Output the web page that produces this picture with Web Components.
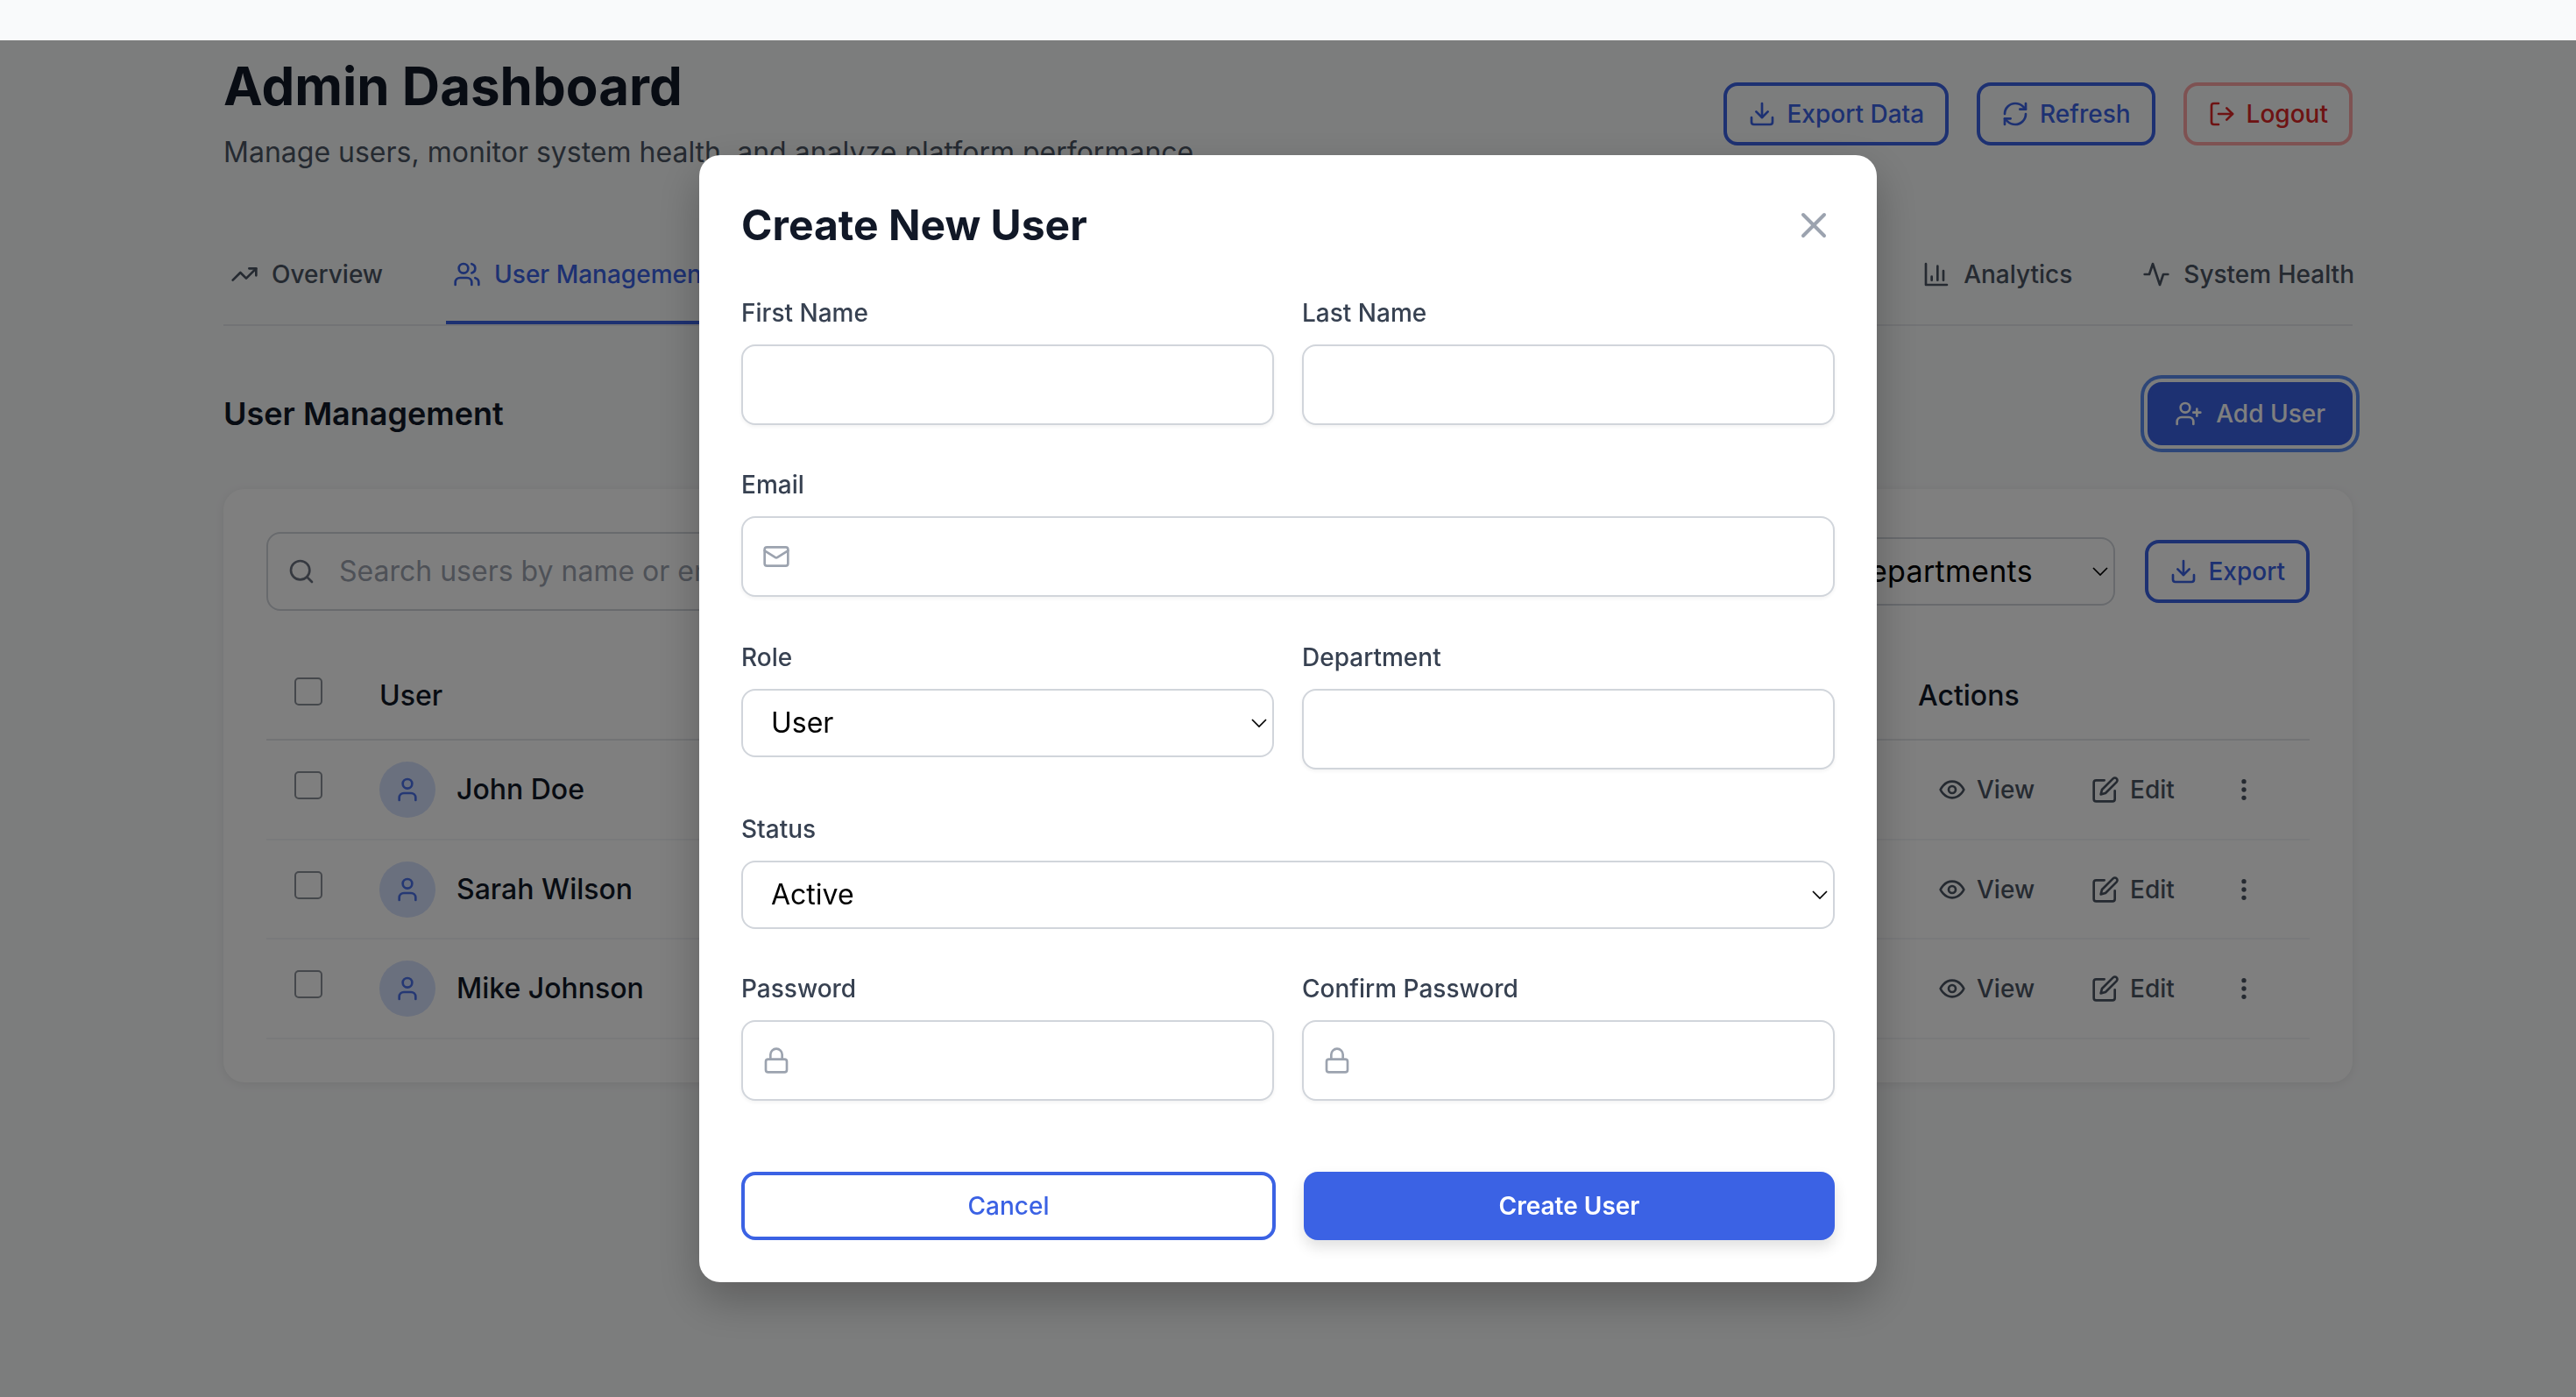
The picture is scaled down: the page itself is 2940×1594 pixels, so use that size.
<!DOCTYPE html>
<html lang="en">
<head>
<meta charset="utf-8">
<title>Admin Dashboard</title>
<style>
  html, body { margin: 0; height: 100%; }
  body {
    background: #f9fafb;
    color: #111827;
    font-family: Inter, "Noto Sans", sans-serif;
    overflow: hidden;
  }
</style>
</head>
<body>
<admin-dashboard></admin-dashboard>
<create-user-modal></create-user-modal>

<script>
// Lucide style paths, all on a 24 box
const ICONS = {
  trend: '<polyline points="22 7 13.5 15.5 8.5 10.5 2 17"/><polyline points="16 7 22 7 22 13"/>',
  users: '<path d="M16 21v-2a4 4 0 0 0-4-4H6a4 4 0 0 0-4 4v2"/><circle cx="9" cy="7" r="4"/><path d="M22 21v-2a4 4 0 0 0-3-3.87"/><path d="M16 3.13a4 4 0 0 1 0 7.75"/>',
  chart: '<path d="M3 3v18h18"/><path d="M18 17V9"/><path d="M13 17V5"/><path d="M8 17v-3"/>',
  activity: '<path d="M22 12h-4l-3 9L9 3l-3 9H2"/>',
  download: '<path d="M21 15v4a2 2 0 0 1-2 2H5a2 2 0 0 1-2-2v-4"/><polyline points="7 10 12 15 17 10"/><line x1="12" y1="15" x2="12" y2="3"/>',
  refresh: '<path d="M3 12a9 9 0 0 1 9-9 9.75 9.75 0 0 1 6.74 2.74L21 8"/><path d="M21 3v5h-5"/><path d="M21 12a9 9 0 0 1-9 9 9.75 9.75 0 0 1-6.74-2.74L3 16"/><path d="M8 16H3v5"/>',
  logout: '<path d="M9 21H5a2 2 0 0 1-2-2V5a2 2 0 0 1 2-2h4"/><polyline points="16 17 21 12 16 7"/><line x1="21" y1="12" x2="9" y2="12"/>',
  userplus: '<path d="M16 21v-2a4 4 0 0 0-4-4H6a4 4 0 0 0-4 4v2"/><circle cx="9" cy="7" r="4"/><line x1="19" y1="8" x2="19" y2="14"/><line x1="22" y1="11" x2="16" y2="11"/>',
  search: '<circle cx="11" cy="11" r="8"/><path d="m21 21-4.3-4.3"/>',
  user: '<path d="M19 21v-2a4 4 0 0 0-4-4H9a4 4 0 0 0-4 4v2"/><circle cx="12" cy="7" r="4"/>',
  eye: '<path d="M2 12s3-7 10-7 10 7 10 7-3 7-10 7-10-7-10-7Z"/><circle cx="12" cy="12" r="3"/>',
  edit: '<path d="M11 4H4a2 2 0 0 0-2 2v14a2 2 0 0 0 2 2h14a2 2 0 0 0 2-2v-7"/><path d="M18.5 2.5a2.12 2.12 0 0 1 3 3L12 15l-4 1 1-4Z"/>',
  more: '<circle cx="12" cy="5" r="1"/><circle cx="12" cy="12" r="1"/><circle cx="12" cy="19" r="1"/>',
  mail: '<rect x="2" y="4" width="20" height="16" rx="2"/><path d="m22 7-8.97 5.7a1.94 1.94 0 0 1-2.06 0L2 7"/>',
  lock: '<rect x="3" y="11" width="18" height="11" rx="2"/><path d="M7 11V7a5 5 0 0 1 10 0v4"/>',
  close: '<path d="M18 6 6 18"/><path d="m6 6 12 12"/>'
};

class AppIcon extends HTMLElement {
  constructor() {
    super();
    this.attachShadow({ mode: 'open' });
  }

  connectedCallback() {
    const size = this.getAttribute('size') || 32;
    this.shadowRoot.innerHTML = `
      <style>
        :host { display: inline-flex; flex: none; }
        svg { display: block; }
      </style>
      <svg width="${size}" height="${size}" viewBox="0 0 24 24" fill="none" stroke="currentColor"
           stroke-width="2" stroke-linecap="round" stroke-linejoin="round">${ICONS[this.getAttribute('name')]}</svg>
    `;
  }
}

class AppButton extends HTMLElement {
  constructor() {
    super();
    this.attachShadow({ mode: 'open' });
  }

  connectedCallback() {
    const icon = this.getAttribute('icon');
    this.shadowRoot.innerHTML = `
      <style>
        :host { display: inline-flex; flex: none; }
        button {
          display: flex;
          align-items: center;
          justify-content: center;
          gap: 12px;
          box-sizing: border-box;
          width: 100%;
          height: 72px;
          padding: 0 24px;
          border: 4px solid #3b62e4;
          border-radius: 16px;
          background: transparent;
          color: #3b62e4;
          font: 500 28px/40px Inter, sans-serif;
        }
        :host([variant="danger"]) button { border-color: #fca5a5; color: #dc2626; }
        /* Add User keeps its focus ring from the click that opened the modal */
        :host([variant="focused"]) button {
          background: #3b62e4;
          color: #fff;
          gap: 15px;
          padding: 0 27px;
          box-shadow: 0 0 0 4px #f9fafb, 0 0 0 8px #5a8cf0;
        }
        :host([variant="cancel"]) button { height: 78px; background: #fff; padding: 0 16px; }
        :host([variant="submit"]) button {
          height: 78px;
          padding: 0 16px;
          border-width: 2px;
          background: #3b62e4;
          color: #fff;
          font-weight: 600;
          box-shadow: 0 8px 16px rgba(0, 0, 0, .12);
        }
      </style>
      <button type="button">
        ${icon ? `<app-icon name="${icon}"></app-icon>` : ''}
        <slot></slot>
      </button>
    `;
  }
}

class TabItem extends HTMLElement {
  constructor() {
    super();
    this.attachShadow({ mode: 'open' });
  }

  connectedCallback() {
    this.shadowRoot.innerHTML = `
      <style>
        :host {
          display: flex;
          align-items: center;
          gap: 15px;
          height: 40px;
          padding: 0 8px 33px;
          border-bottom: 4px solid transparent;
          color: #4b5563;
          font: 500 28px/40px Inter, sans-serif;
          white-space: nowrap;
        }
        :host([active]) { border-bottom-color: #3b62e4; color: #3b62e4; }
      </style>
      <app-icon name="${this.getAttribute('icon')}"></app-icon>
      <slot></slot>
    `;
  }
}

class TabBar extends HTMLElement {
  constructor() {
    super();
    this.attachShadow({ mode: 'open' });
    this.shadowRoot.innerHTML = `
      <style>
        :host {
          display: flex;
          gap: 64px;
          border-bottom: 2px solid #e5e7eb;
        }
      </style>
      <slot></slot>
    `;
  }
}

class SelectBox extends HTMLElement {
  constructor() {
    super();
    this.attachShadow({ mode: 'open' });
    this.shadowRoot.innerHTML = `
      <style>
        :host {
          display: flex;
          align-items: center;
          justify-content: space-between;
          box-sizing: border-box;
          height: 78px;
          padding: 0 6px 0 32px;
          border: 2px solid #d1d5db;
          border-radius: 16px;
          background: #fff;
          color: #000;
          font: 400 32px/40px Inter, sans-serif;
        }
        svg { display: block; flex: none; }
      </style>
      <slot></slot>
      <svg width="18" height="10" viewBox="0 0 18 10" fill="none" stroke="currentColor" stroke-width="1.7">
        <polyline points="1 1 9 9 17 1"/>
      </svg>
    `;
  }
}

class SearchBox extends HTMLElement {
  constructor() {
    super();
    this.attachShadow({ mode: 'open' });
    this.shadowRoot.innerHTML = `
      <style>
        :host {
          display: flex;
          align-items: center;
          gap: 27px;
          box-sizing: border-box;
          height: 90px;
          padding: 0 24px 0 22px;
          border: 2px solid #d1d5db;
          border-radius: 16px;
          background: #fff;
        }
        app-icon { color: #6b7280; }
        input {
          flex: 1;
          min-width: 0;
          border: 0;
          outline: 0;
          padding: 0;
          background: transparent;
          font: 400 32px/40px Inter, sans-serif;
        }
        input::placeholder { color: #9ca3af; opacity: 1; }
      </style>
      <app-icon name="search"></app-icon>
      <input type="text" placeholder="Search users by name or email...">
    `;
  }
}

class UserRow extends HTMLElement {
  constructor() {
    super();
    this.attachShadow({ mode: 'open' });
    this.shadowRoot.innerHTML = `
      <style>
        :host {
          display: grid;
          grid-template-columns: 129px 1fr 447px;
          align-items: center;
          box-sizing: border-box;
          height: 113.7px;
          border-bottom: 2px solid #f3f4f6;
        }
        .check {
          box-sizing: border-box;
          width: 32px;
          height: 32px;
          margin: 0 0 10px 32px;
          border: 2px solid #8b9098;
          border-radius: 5px;
          background: #fff;
        }
        .user { display: flex; align-items: center; gap: 24px; color: #111827; font: 500 32px/40px Inter, sans-serif; }
        .avatar {
          display: flex;
          align-items: center;
          justify-content: center;
          width: 64px;
          height: 64px;
          border-radius: 50%;
          background: #d4e0fc;
          color: #4a70e8;
        }
        .actions {
          display: flex;
          align-items: center;
          gap: 65px;
          padding-left: 23px;
          color: #4b5563;
          font: 500 28px/40px Inter, sans-serif;
        }
        .action { display: flex; align-items: center; gap: 12px; }
        .dots { margin-left: -2px; }
      </style>
      <div class="check"></div>
      <div class="user">
        <div class="avatar"><app-icon name="user"></app-icon></div>
        <slot></slot>
      </div>
      <div class="actions">
        <div class="action"><app-icon name="eye"></app-icon>View</div>
        <div class="action"><app-icon name="edit"></app-icon>Edit</div>
        <app-icon class="dots" name="more"></app-icon>
      </div>
    `;
  }
}

class UserTable extends HTMLElement {
  constructor() {
    super();
    this.attachShadow({ mode: 'open' });
    this.shadowRoot.innerHTML = `
      <style>
        :host { display: block; }
        .head {
          display: grid;
          grid-template-columns: 129px 1fr 447px;
          align-items: center;
          box-sizing: border-box;
          height: 100px;
          margin-top: 48px;
          border-bottom: 2px solid #e5e7eb;
          color: #111827;
          font: 500 32px/40px Inter, sans-serif;
        }
        .check {
          box-sizing: border-box;
          width: 32px;
          height: 32px;
          margin: 0 0 10px 32px;
          border: 2px solid #8b9098;
          border-radius: 5px;
          background: #fff;
        }
      </style>
      <div class="head">
        <div class="check"></div>
        <div>User</div>
        <div>Actions</div>
      </div>
      <slot></slot>
    `;
  }
}

class AdminDashboard extends HTMLElement {
  constructor() {
    super();
    this.attachShadow({ mode: 'open' });
    this.shadowRoot.innerHTML = `
      <style>
        :host { display: block; padding: 62px 255px 0; }
        header { display: flex; align-items: center; justify-content: space-between; }
        h1 { margin: 0; font: 700 60px/72px Inter, sans-serif; color: #111827; }
        .sub { margin: 12px 0 0; font: 400 32px/56px Inter, sans-serif; color: #4b5563; white-space: nowrap; }
        .head-actions { display: flex; gap: 32px; margin-bottom: 4px; }
        tab-bar { margin-top: 91px; }
        tab-item:last-child { margin-right: -10px; }
        .spacer { flex: 1; }
        .section {
          display: flex;
          align-items: center;
          justify-content: space-between;
          margin-top: 64px;
        }
        h2 { margin: 0; font: 600 36px/56px Inter, sans-serif; color: #111827; }
        .card {
          margin-top: 50px;
          padding: 49px 49px 49px 49px;
          border-radius: 24px;
          background: #fff;
          box-shadow: 0 2px 12px rgba(0, 0, 0, .08);
        }
        .toolbar { display: flex; align-items: center; gap: 34px; }
        search-box { flex: 1; }
        select-box { width: 390px; flex: none; font-size: 34px; letter-spacing: .3px; }
      </style>
      <header>
        <div>
          <h1>Admin Dashboard</h1>
          <p class="sub">Manage users, monitor system health, and analyze platform performance.</p>
        </div>
        <div class="head-actions">
          <app-button icon="download">Export Data</app-button>
          <app-button icon="refresh">Refresh</app-button>
          <app-button icon="logout" variant="danger">Logout</app-button>
        </div>
      </header>
      <tab-bar>
        <tab-item icon="trend">Overview</tab-item>
        <tab-item icon="users" active>User Management</tab-item>
        <div class="spacer"></div>
        <tab-item icon="chart">Analytics</tab-item>
        <tab-item icon="activity">System Health</tab-item>
      </tab-bar>
      <div class="section">
        <h2>User Management</h2>
        <app-button icon="userplus" variant="focused">Add User</app-button>
      </div>
      <div class="card">
        <div class="toolbar">
          <search-box></search-box>
          <select-box>All Departments</select-box>
          <app-button icon="download">Export</app-button>
        </div>
        <user-table>
          <user-row>John Doe</user-row>
          <user-row>Sarah Wilson</user-row>
          <user-row>Mike Johnson</user-row>
        </user-table>
      </div>
    `;
  }
}

class FormField extends HTMLElement {
  constructor() {
    super();
    this.attachShadow({ mode: 'open' });
  }

  connectedCallback() {
    const icon = this.getAttribute('icon');
    const type = this.getAttribute('type') || 'text';
    this.shadowRoot.innerHTML = `
      <style>
        :host { display: block; margin-bottom: 48px; }
        label {
          display: block;
          margin-bottom: 16px;
          color: #374151;
          font: 500 28px/40px Inter, sans-serif;
        }
        .box {
          display: flex;
          align-items: center;
          gap: 16px;
          box-sizing: border-box;
          height: 92px;
          padding: 0 22px;
          border: 2px solid #d1d5db;
          border-radius: 16px;
          background: #fff;
          box-shadow: 0 2px 4px rgba(0, 0, 0, .05);
        }
        app-icon { color: #9ca3af; }
        input {
          flex: 1;
          min-width: 0;
          border: 0;
          outline: 0;
          padding: 0;
          background: transparent;
          font: 400 32px/40px Inter, sans-serif;
        }
      </style>
      <label>${this.getAttribute('label')}</label>
      <slot>
        <div class="box">
          ${icon ? `<app-icon name="${icon}"></app-icon>` : ''}
          <input type="${type}">
        </div>
      </slot>
    `;
  }
}

class CreateUserModal extends HTMLElement {
  constructor() {
    super();
    this.attachShadow({ mode: 'open' });
    this.shadowRoot.innerHTML = `
      <style>
        :host {
          position: fixed;
          top: 46px;
          left: 0;
          right: 0;
          bottom: 0;
          display: flex;
          align-items: center;
          justify-content: center;
          background: rgba(0, 0, 0, .5);
        }
        .modal {
          box-sizing: border-box;
          width: 1344px;
          padding: 48px;
          border-radius: 24px;
          background: #fff;
          box-shadow: 0 20px 50px rgba(0, 0, 0, .25);
        }
        .title {
          display: flex;
          align-items: center;
          justify-content: space-between;
          height: 64px;
          margin-bottom: 48px;
        }
        h2 { margin: 0; color: #111827; font: 700 48px/64px Inter, sans-serif; }
        .close { color: #9ca3af; }
        .row { display: grid; grid-template-columns: 1fr 1fr; gap: 32px; }
        .email { margin-bottom: 49px; }
        .buttons { display: flex; gap: 32px; padding-top: 33px; }
        .buttons app-button[variant="cancel"] { flex: 0 0 610px; }
        .buttons app-button[variant="submit"] { flex: 1 1 0; }
      </style>
      <div class="modal">
        <div class="title">
          <h2>Create New User</h2>
          <app-icon class="close" name="close" size="48"></app-icon>
        </div>
        <div class="row">
          <form-field label="First Name"></form-field>
          <form-field label="Last Name"></form-field>
        </div>
        <form-field class="email" label="Email" icon="mail" type="email"></form-field>
        <div class="row">
          <form-field label="Role"><select-box>User</select-box></form-field>
          <form-field label="Department"></form-field>
        </div>
        <form-field label="Status"><select-box>Active</select-box></form-field>
        <div class="row">
          <form-field label="Password" icon="lock" type="password"></form-field>
          <form-field label="Confirm Password" icon="lock" type="password"></form-field>
        </div>
        <div class="buttons">
          <app-button variant="cancel">Cancel</app-button>
          <app-button variant="submit">Create User</app-button>
        </div>
      </div>
    `;
  }
}

customElements.define('app-icon', AppIcon);
customElements.define('app-button', AppButton);
customElements.define('tab-item', TabItem);
customElements.define('tab-bar', TabBar);
customElements.define('select-box', SelectBox);
customElements.define('search-box', SearchBox);
customElements.define('user-row', UserRow);
customElements.define('user-table', UserTable);
customElements.define('admin-dashboard', AdminDashboard);
customElements.define('form-field', FormField);
customElements.define('create-user-modal', CreateUserModal);
</script>
</body>
</html>
